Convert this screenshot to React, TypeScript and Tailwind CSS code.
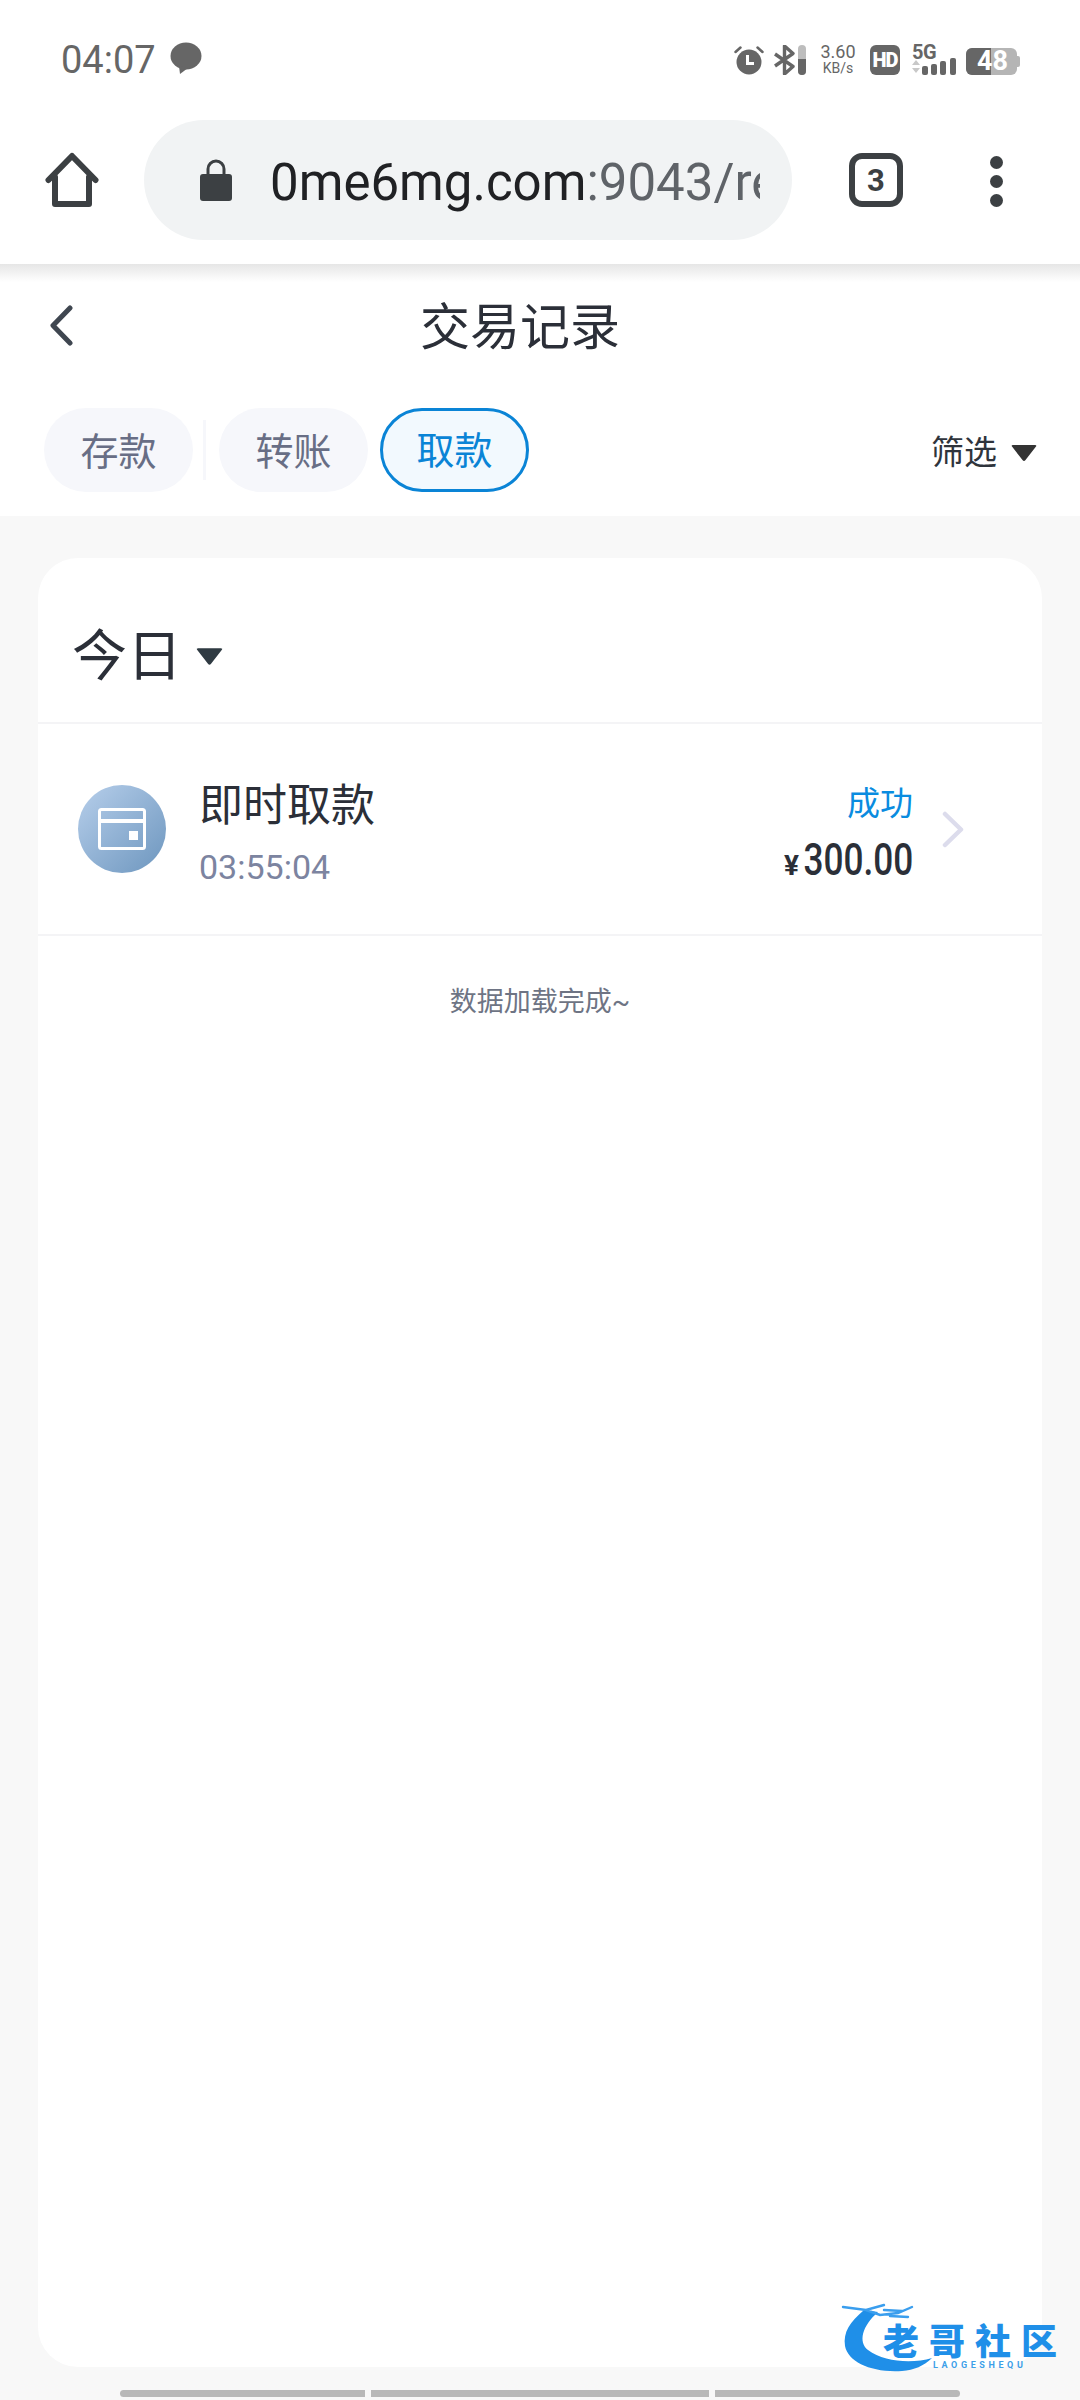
const Triangle = ({ className }: { className: string }) => (
  <svg viewBox="0 0 28 18" className={className}>
    <path d="M2 2.5Q1 1 3 1H25Q27 1 26 2.5L15.5 16Q14 18 12.5 16Z" fill="currentColor" />
  </svg>
);

function StatusIcons() {
  return (
    <div className="flex items-center text-[#666666]">
      {/* alarm */}
      <svg viewBox="0 0 30 30" className="w-[30px] h-[30px]">
        <circle cx="15" cy="17" r="12.5" fill="currentColor" />
        <path d="M1.5 7L6.5 2.5M28.5 7L23.5 2.5" stroke="currentColor" strokeWidth="2.5" strokeLinecap="round" />
        <path d="M13.5 10V18.5H20" stroke="#fff" strokeWidth="3" fill="none" />
      </svg>
      {/* bluetooth with charge bar */}
      <svg viewBox="0 0 33 30" className="w-[33px] h-[30px] ml-[10px]">
        <path d="M1 9L19 21.5L10.5 29V1L19 8.5L1 21" stroke="currentColor" strokeWidth="3.4" fill="none" strokeLinejoin="round" />
        <rect x="24" y="0" width="8" height="30" rx="4" fill="#bdbdbd" />
        <path d="M24 14H32V26A4 4 0 0 1 24 26Z" fill="currentColor" />
      </svg>
      <div className="w-[38px] ml-[12px] flex flex-col items-center">
        <span className="text-[18px] leading-[18px]">3.60</span>
        <span className="text-[14px] leading-[15px]">KB/s</span>
      </div>
      <div className="w-[30px] h-[30px] ml-[13px] rounded-[6px] bg-[#666666] text-white text-[20px] font-black flex items-center justify-center leading-none tracking-[-1px]">
        HD
      </div>
      {/* 5G + signal */}
      <div className="relative w-[45px] h-[30px] ml-[12px]">
        <span className="absolute left-0 top-[-3px] text-[20px] font-bold leading-[20px] tracking-[-0.5px]">5G</span>
        <svg viewBox="0 0 45 30" className="w-[45px] h-[30px]">
          <path d="M0 20L4 15L8 20ZM0 23H8L4 28Z" fill="#c8c8c8" />
          <rect x="10" y="21" width="6" height="9" rx="2" fill="currentColor" />
          <rect x="19" y="19" width="6" height="11" rx="2" fill="currentColor" />
          <rect x="28" y="16" width="6" height="14" rx="2" fill="currentColor" />
          <rect x="38" y="13" width="6" height="17" rx="2" fill="currentColor" />
        </svg>
      </div>
      {/* battery */}
      <div className="relative w-[54px] h-[27px] ml-[9px] mt-[3px]">
        <div className="absolute left-0 top-0 w-[51px] h-[27px] rounded-[6px] bg-[#b5b5b5] overflow-hidden">
          <div className="w-[25px] h-full bg-[#666666]" />
        </div>
        <div className="absolute right-0 top-[8px] w-[3px] h-[11px] rounded-r-[2px] bg-[#b5b5b5]" />
        <span className="absolute left-[11px] top-0 text-white text-[27px] font-bold leading-[27px]">48</span>
      </div>
    </div>
  );
}

function BrowserBar() {
  return (
    <div className="h-[154px] flex items-start bg-white">
      <svg viewBox="0 0 54 56" className="w-[54px] h-[56px] ml-[45px] mt-[42px] text-[#3c4043]">
        <path
          d="M3.5 28L27 4L50.5 28M10 25V52H44V25"
          stroke="currentColor"
          strokeWidth="6"
          fill="none"
          strokeLinejoin="round"
          strokeLinecap="round"
        />
      </svg>
      <div className="w-[648px] h-[120px] ml-[45px] mt-[10px] rounded-full bg-[#f1f3f4] flex items-center overflow-hidden">
        <svg viewBox="0 0 32 44" className="w-[32px] h-[44px] ml-[56px] shrink-0 text-[#3c4043]">
          <path d="M8 18V11A8 8 0 0 1 24 11V18" stroke="currentColor" strokeWidth="3" fill="none" />
          <rect x="0" y="16" width="32" height="27" rx="3" fill="currentColor" />
        </svg>
        <div className="w-[490px] ml-[38px] mt-[5px] overflow-hidden whitespace-nowrap text-[51px] leading-[60px] text-[#202124]">
          0me6mg.com<span className="text-[#5f6368]">:9043/recordlist</span>
        </div>
      </div>
      <div className="w-[54px] h-[54px] ml-[57px] mt-[43px] rounded-[13px] border-[6px] border-[#3c4043] flex items-center justify-center text-[#3c4043] text-[31px] font-bold leading-none">
        3
      </div>
      <div className="ml-[87px] mt-[46px] flex flex-col gap-[6px]">
        <div className="w-[13px] h-[13px] rounded-full bg-[#3c4043]" />
        <div className="w-[13px] h-[13px] rounded-full bg-[#3c4043]" />
        <div className="w-[13px] h-[13px] rounded-full bg-[#3c4043]" />
      </div>
    </div>
  );
}

function Tabs() {
  return (
    <div className="h-[108px] pl-[44px] pr-[42px] flex items-start bg-white">
      <div className="w-[149px] h-[84px] pt-[4px] rounded-[42px] bg-[#f6f7fb] flex items-center justify-center text-[38px] text-[#686e85]">
        存款
      </div>
      <div className="w-[3px] h-[60px] ml-[10px] mt-[12px] bg-[#f6f7fb]" />
      <div className="w-[149px] h-[84px] pt-[4px] ml-[13px] rounded-[42px] bg-[#f6f7fb] flex items-center justify-center text-[38px] text-[#686e85]">
        转账
      </div>
      <div className="w-[149px] h-[84px] pt-[2px] ml-[12px] rounded-[42px] border-[3px] border-[#0a84d6] bg-[#f2f9fe] flex items-center justify-center text-[38px] text-[#0a84d6]">
        取款
      </div>
      <div className="ml-auto h-[84px] pt-[5px] flex items-center text-[#2f343c]">
        <span className="text-[33px]">筛选</span>
        <Triangle className="w-[28px] h-[18px] ml-[13px] text-[#333333]" />
      </div>
    </div>
  );
}

function RecordRow() {
  return (
    <div className="h-[212px] flex items-center pl-[40px] pr-[78px] border-b-2 border-[#f4f4f6]">
      <div className="w-[88px] h-[88px] shrink-0 rounded-full bg-gradient-to-br from-[#b7cfeb] to-[#6d96be] flex items-center justify-center">
        <svg viewBox="0 0 48 42" className="w-[48px] h-[42px]">
          <rect x="1.5" y="1.5" width="45" height="39" rx="2" fill="none" stroke="#fff" strokeWidth="3" />
          <rect x="3" y="11" width="42" height="4" fill="#fff" />
          <rect x="31" y="23" width="9" height="9" fill="#fff" />
        </svg>
      </div>
      <div className="ml-[33px] mt-[7px] flex flex-col">
        <span className="text-[44px] leading-[56px] text-[#2b2f38]">即时取款</span>
        <span className="mt-[13px] text-[34px] leading-[40px] text-[#7c84a0]">03:55:04</span>
      </div>
      <div className="ml-auto mt-[18px] flex flex-col items-end">
        <span className="text-[33px] leading-[44px] text-[#0a8ce0]">成功</span>
        <div className="mt-[6px] flex items-baseline text-[#2b2f38] leading-[56px]">
          <span className="text-[28px] font-bold">¥</span>
          <div className="w-[114px] flex justify-end">
            <span className="text-[44px] font-medium whitespace-nowrap origin-right scale-x-[0.8]">300.00</span>
          </div>
        </div>
      </div>
      <svg viewBox="0 0 22 37" className="w-[22px] h-[37px] ml-[29px] shrink-0 text-[#dcdcec]">
        <path d="M3 3L19 18.5L3 34" stroke="currentColor" strokeWidth="4.5" fill="none" strokeLinecap="round" strokeLinejoin="round" />
      </svg>
    </div>
  );
}

export default function App() {
  return (
    <div className="relative w-[1080px] h-[2400px] overflow-hidden bg-[#f8f8f8] font-['Roboto','Noto_Sans_CJK_SC',sans-serif]">
      {/* phone status bar */}
      <div className="h-[110px] bg-white flex items-start pt-[43px] pl-[61px] pr-[60px]">
        <span className="text-[38px] leading-[34px] text-[#666666]">04:07</span>
        <svg viewBox="0 0 32 32" className="w-[32px] h-[32px] ml-[14px] mt-[-1px] text-[#666666]">
          <ellipse cx="16" cy="14" rx="15.5" ry="13.5" fill="currentColor" />
          <path d="M9 24L10 32L18 26Z" fill="currentColor" />
        </svg>
        <div className="ml-auto">
          <StatusIcons />
        </div>
      </div>

      <BrowserBar />
      <div className="h-[18px] bg-gradient-to-b from-[#e6e6e6] to-white" />

      {/* page header */}
      <div className="h-[126px] bg-white relative flex items-start justify-center pr-[40px]">
        <svg viewBox="0 0 24 41" className="absolute left-[49px] top-[23px] w-[24px] h-[41px] text-[#3f4650]">
          <path d="M21 3L4 20.5L21 38" stroke="currentColor" strokeWidth="5" fill="none" strokeLinecap="round" strokeLinejoin="round" />
        </svg>
        <h1 className="mt-[16px] text-[50px] leading-[60px] font-normal text-[#2b2f38] whitespace-nowrap">
          交易记录
        </h1>
      </div>

      <Tabs />

      {/* list card */}
      <div className="mx-[38px] mt-[42px] h-[1809px] rounded-[40px] bg-white flex flex-col">
        <div className="h-[166px] shrink-0 pl-[34px] flex items-center pt-[32px] border-b-2 border-[#f4f4f6]">
          <span className="text-[55px] leading-[60px] text-[#2b2f38]">今日</span>
          <Triangle className="w-[29px] h-[19px] ml-[13px] text-[#2f3a42]" />
        </div>
        <RecordRow />
        <div className="mt-[48px] text-center text-[27px] leading-[36px] text-[#6e7484]">数据加载完成~</div>
      </div>

      {/* scroll segments */}
      <div className="mt-[23px] pl-[120px] flex gap-[6px]">
        <div className="w-[245px] h-[7px] rounded-l-full bg-[#b8b8b8]" />
        <div className="w-[338px] h-[7px] bg-[#b8b8b8]" />
        <div className="w-[245px] h-[7px] rounded-r-full bg-[#b8b8b8]" />
      </div>

      {/* watermark */}
      <div className="absolute left-[840px] top-[2302px] w-[226px] h-[72px]">
        <svg viewBox="0 0 226 72" className="absolute inset-0 w-[226px] h-[72px]">
          <path d="M24 8C10 20 3 30 5 44C8 60 32 71 62 69C74 68 84 64 92 56C72 62 44 60 28 48C18 40 22 24 38 10Z" fill="#1f8fe8" />
          <path d="M3 5L26 8L44 3M26 8L40 13L58 11L72 5M44 8L62 9M50 14L68 15" stroke="#3a9eee" strokeWidth="2.4" fill="none" strokeLinecap="round" />
        </svg>
        <span className="absolute left-[43px] top-[21px] text-[36px] font-black leading-[40px] tracking-[10px] whitespace-nowrap text-[#1f8fe8]">
          老哥社区
        </span>
        <span className="absolute left-[93px] top-[58px] text-[9px] font-bold leading-[10px] tracking-[3.6px] whitespace-nowrap text-[#3d9fe8]">
          LAOGESHEQU
        </span>
      </div>
    </div>
  );
}
